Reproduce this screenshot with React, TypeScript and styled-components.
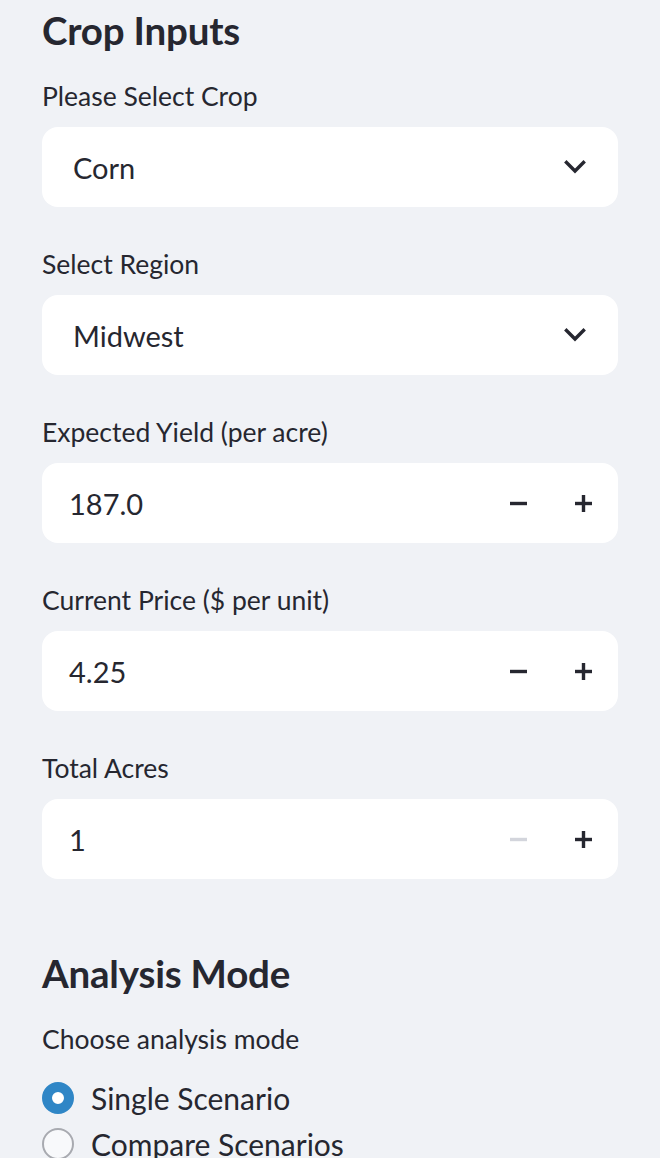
import React, { useState } from "react";
import styled, { createGlobalStyle } from "styled-components";

const GlobalStyle = createGlobalStyle`
  html, body {
    margin: 0;
    padding: 0;
    background: #f0f2f6;
  }
  body {
    font-family: "Source Sans Pro", Lato, "Noto Sans", sans-serif;
    color: #262730;
    -webkit-font-smoothing: antialiased;
  }
`;

const Sidebar = styled.div`
  width: 660px;
  height: 1158px;
  overflow: hidden;
  box-sizing: border-box;
  padding: 0 42px;
  background: #f0f2f6;
`;

const Heading = styled.h2<{ $top: number }>`
  margin: ${(p) => p.$top}px 0 14px;
  font-size: 38.5px;
  line-height: 60px;
  height: 60px;
  font-weight: 700;
  letter-spacing: -0.2px;
`;

const Field = styled.div`
  display: flex;
  flex-direction: column;
`;

const Label = styled.label`
  font-size: 26.5px;
  line-height: 44px;
  height: 44px;
  margin-bottom: 9px;
  font-weight: 400;
`;

const Box = styled.div`
  display: flex;
  align-items: center;
  height: 80px;
  border-radius: 16px;
  background: #ffffff;
  margin-bottom: 35px;
`;

const SelectValue = styled.span`
  flex: 1;
  padding-left: 31px;
  font-size: 29px;
`;

const Chevron = styled.span`
  display: flex;
  align-items: center;
  justify-content: center;
  width: 44px;
  margin-right: 21px;
`;

const NumberValue = styled.span`
  flex: 1;
  padding-left: 27px;
  font-size: 29px;
`;

const StepButton = styled.button<{ $disabled?: boolean }>`
  display: flex;
  align-items: center;
  justify-content: center;
  width: 65px;
  height: 100%;
  border: none;
  background: transparent;
  padding: 0;
  color: ${(p) => (p.$disabled ? "#d3d5dc" : "#262730")};
  cursor: pointer;
`;

const Steps = styled.div`
  display: flex;
  height: 100%;
  margin-right: 2px;
`;

const RadioGroup = styled.div`
  display: flex;
  flex-direction: column;
  gap: 10px;
  margin-top: 10px;
`;

const RadioRow = styled.label`
  display: flex;
  align-items: center;
  gap: 17px;
  height: 36px;
  font-size: 30px;
  cursor: pointer;
`;

const RadioDot = styled.span<{ $checked: boolean }>`
  width: 32px;
  height: 32px;
  box-sizing: border-box;
  border-radius: 50%;
  flex-shrink: 0;
  ${(p) =>
    p.$checked
      ? "border: 10.5px solid #2f86c6; background: #ffffff;"
      : "border: 2px solid #a8aab0; background: #f8f9fb;"}
`;

const ChevronIcon = () => (
  <svg width="22" height="14" viewBox="0 0 22 14">
    <path d="M2.5 2.5 L11 11 L19.5 2.5" fill="none" stroke="#262730" strokeWidth="3.4" strokeLinecap="square" />
  </svg>
);

const MinusIcon = () => (
  <svg width="17" height="17" viewBox="0 0 17 17">
    <rect x="0" y="6.8" width="17" height="3.4" fill="currentColor" />
  </svg>
);

const PlusIcon = () => (
  <svg width="17" height="17" viewBox="0 0 17 17">
    <rect x="0" y="6.8" width="17" height="3.4" fill="currentColor" />
    <rect x="6.8" y="0" width="3.4" height="17" fill="currentColor" />
  </svg>
);

const SelectBox = ({ label, value }: { label: string; value: string }) => (
  <Field>
    <Label>{label}</Label>
    <Box>
      <SelectValue>{value}</SelectValue>
      <Chevron>
        <ChevronIcon />
      </Chevron>
    </Box>
  </Field>
);

const NumberBox = ({ label, value, minDisabled }: { label: string; value: string; minDisabled?: boolean }) => (
  <Field>
    <Label>{label}</Label>
    <Box>
      <NumberValue>{value}</NumberValue>
      <Steps>
        <StepButton $disabled={minDisabled}>
          <MinusIcon />
        </StepButton>
        <StepButton>
          <PlusIcon />
        </StepButton>
      </Steps>
    </Box>
  </Field>
);

export default function App() {
  const [mode, setMode] = useState("single");
  return (
    <>
      <GlobalStyle />
      <Sidebar>
        <Heading $top={0}>Crop Inputs</Heading>
        <SelectBox label="Please Select Crop" value="Corn" />
        <SelectBox label="Select Region" value="Midwest" />
        <NumberBox label="Expected Yield (per acre)" value="187.0" />
        <NumberBox label="Current Price ($ per unit)" value="4.25" />
        <NumberBox label="Total Acres" value="1" minDisabled />
        <Heading $top={29}>Analysis Mode</Heading>
        <Field>
          <Label>Choose analysis mode</Label>
          <RadioGroup>
            <RadioRow onClick={() => setMode("single")}>
              <RadioDot $checked={mode === "single"} />
              Single Scenario
            </RadioRow>
            <RadioRow onClick={() => setMode("compare")}>
              <RadioDot $checked={mode === "compare"} />
              Compare Scenarios
            </RadioRow>
          </RadioGroup>
        </Field>
      </Sidebar>
    </>
  );
}
